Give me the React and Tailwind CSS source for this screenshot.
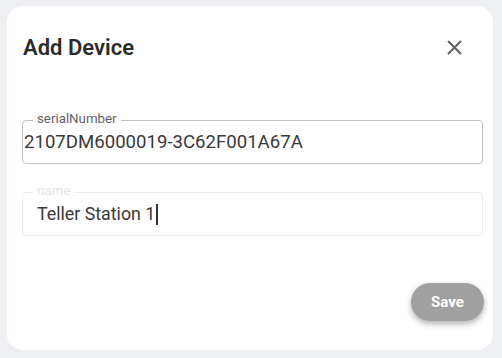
import React from 'react';

const Field = ({ label, value, active, caret }) => (
  <div
    className={`relative h-[44px] w-[461px] rounded-[4px] border ${
      active ? 'border-[#c2c2c2]' : 'border-[#ededed]'
    }`}
  >
    <span
      className={`absolute left-[10px] top-[-10px] bg-white px-[4px] text-[13.3px] leading-[16px] ${
        active ? 'text-[#5f5f5f]' : 'text-[#e6e6e6]'
      }`}
    >
      {label}
    </span>
    <div
      className={`flex h-full items-center text-[#3a3a3a] ${
        active ? 'pl-[1px] pt-[1px] text-[18.6px]' : 'pl-[14px] text-[17.8px]'
      }`}
    >
      {value}
      {caret && <span className="ml-[1px] inline-block h-[21px] w-[1.5px] bg-[#333]" />}
    </div>
  </div>
);

export default function App() {
  return (
    <div
      className="h-[358px] w-[502px] bg-[#eeeff2] pl-[7px] pt-[6px]"
      style={{ fontFamily: 'Roboto, "Liberation Sans", sans-serif' }}
    >
      <div className="flex h-[344px] w-[486px] flex-col rounded-[16px] bg-white pl-[15px] pt-[23px]">
        <div className="flex h-[36px] w-[461px] items-center justify-between">
          <h2 className="pl-[1px] text-[22px] font-semibold text-[#2b2b2b]">Add Device</h2>
          <button className="mr-[19px] flex h-[20px] w-[20px] items-center justify-center text-[#626262]">
            <svg width="15" height="15" viewBox="0 0 15 15" fill="none" stroke="currentColor" strokeWidth="2">
              <path d="M1 1L14 14M14 1L1 14" />
            </svg>
          </button>
        </div>

        <div className="mt-[55px]">
          <Field label="serialNumber" value="2107DM6000019-3C62F001A67A" active />
        </div>
        <div className="mt-[28px]">
          <Field label="name" value="Teller Station 1" caret />
        </div>

        <div className="mt-[47px] flex w-[462px] justify-end">
          <button className="h-[38px] w-[73px] rounded-full bg-[#a0a0a0] text-[15px] font-bold text-white shadow-[0_3px_6px_rgba(0,0,0,0.3)]">
            Save
          </button>
        </div>
      </div>
    </div>
  );
}
